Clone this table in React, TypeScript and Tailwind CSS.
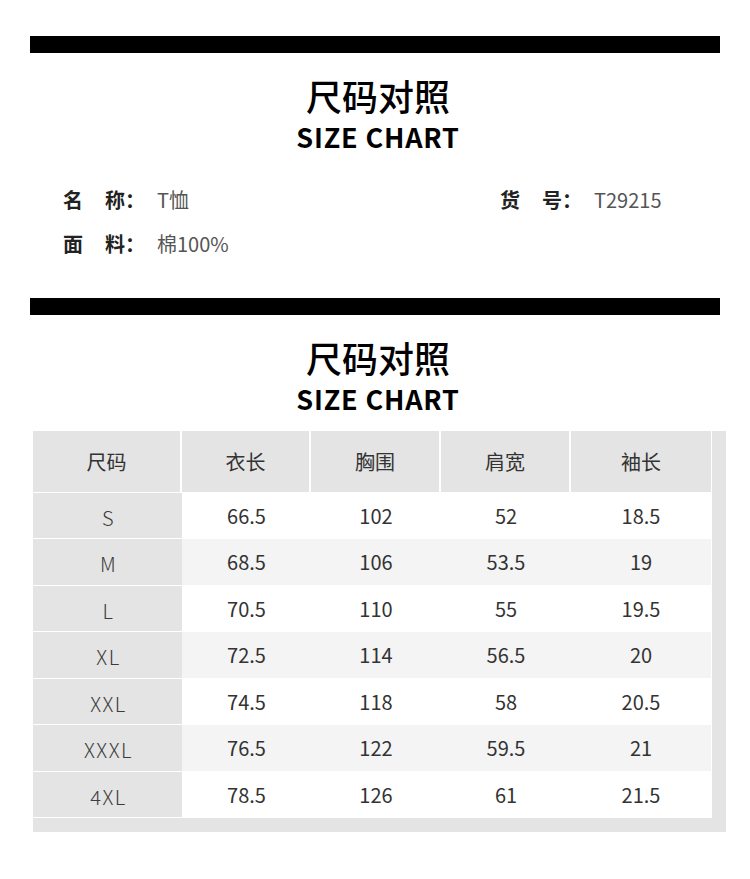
const rows = [
  ["S", "66.5", "102", "52", "18.5"],
  ["M", "68.5", "106", "53.5", "19"],
  ["L", "70.5", "110", "55", "19.5"],
  ["XL", "72.5", "114", "56.5", "20"],
  ["XXL", "74.5", "118", "58", "20.5"],
  ["XXXL", "76.5", "122", "59.5", "21"],
  ["4XL", "78.5", "126", "61", "21.5"],
];

const headers = ["尺码", "衣长", "胸围", "肩宽", "袖长"];
const widths = ["w-[149px]", "w-[129px]", "w-[130px]", "w-[130px]", "w-[140px]"];

function Title() {
  return (
    <div className="flex flex-col items-center pl-[6px] text-black">
      <div className="text-[36px] leading-[36px] font-medium">尺码对照</div>
      <div className="mt-[10px] text-[27px] leading-[28px] font-bold tracking-[0.8px]">SIZE CHART</div>
    </div>
  );
}

function InfoLabel({ a, b }: { a: string; b: string }) {
  return (
    <span className="flex w-[94px] font-bold text-[#222]">
      <span className="w-[42px]">{a}</span>
      <span>{b}：</span>
    </span>
  );
}

export default function App() {
  return (
    <div
      className="w-[750px] min-h-[879px] bg-white pt-[36px]"
      style={{ fontFamily: '"Noto Sans CJK SC", "Noto Sans", sans-serif' }}
    >
      <div className="mx-[30px] h-[17px] bg-black" />

      <div className="mt-[24px]">
        <Title />
      </div>

      <div className="mt-[37px] pl-[63px] text-[20px] leading-[24px]">
        <div className="flex">
          <div className="flex w-[437px]">
            <InfoLabel a="名" b="称" />
            <span className="text-[#555]">T恤</span>
          </div>
          <div className="flex">
            <InfoLabel a="货" b="号" />
            <span className="text-[#555]">T29215</span>
          </div>
        </div>
        <div className="mt-[20px] flex">
          <InfoLabel a="面" b="料" />
          <span className="text-[#555]">棉100%</span>
        </div>
      </div>

      <div className="mt-[42px] mx-[30px] h-[17px] bg-black" />

      <div className="mt-[24px]">
        <Title />
      </div>

      <div className="mt-[18px] ml-[33px] w-[693px] bg-[#e4e4e4] pr-[14px] pb-[14px]">
        <div className="border-r border-white">
          <div className="flex h-[62px] border-b border-white">
            {headers.map((h, i) => (
              <div
                key={h}
                className={`${widths[i]} flex items-center justify-center text-[20px] text-[#333] ${i < 4 ? "border-r-2 border-white" : ""}`}
              >
                {h}
              </div>
            ))}
          </div>
          {rows.map((r, ri) => (
            <div
              key={r[0]}
              className={`flex border-b border-white ${ri % 2 === 1 ? "h-[47px] bg-[#f4f4f4]" : "h-[46px] bg-white"}`}
            >
              {r.map((v, i) => (
                <div
                  key={i}
                  className={`${widths[i]} flex items-center justify-center ${
                    i === 0
                      ? "bg-[#e4e4e4] pt-[4px] pl-[2px] text-[20px] font-light tracking-[1.5px] text-[#3c3c3c]"
                      : "text-[20px] text-[#333]"
                  }`}
                >
                  {v}
                </div>
              ))}
            </div>
          ))}
        </div>
      </div>
    </div>
  );
}
